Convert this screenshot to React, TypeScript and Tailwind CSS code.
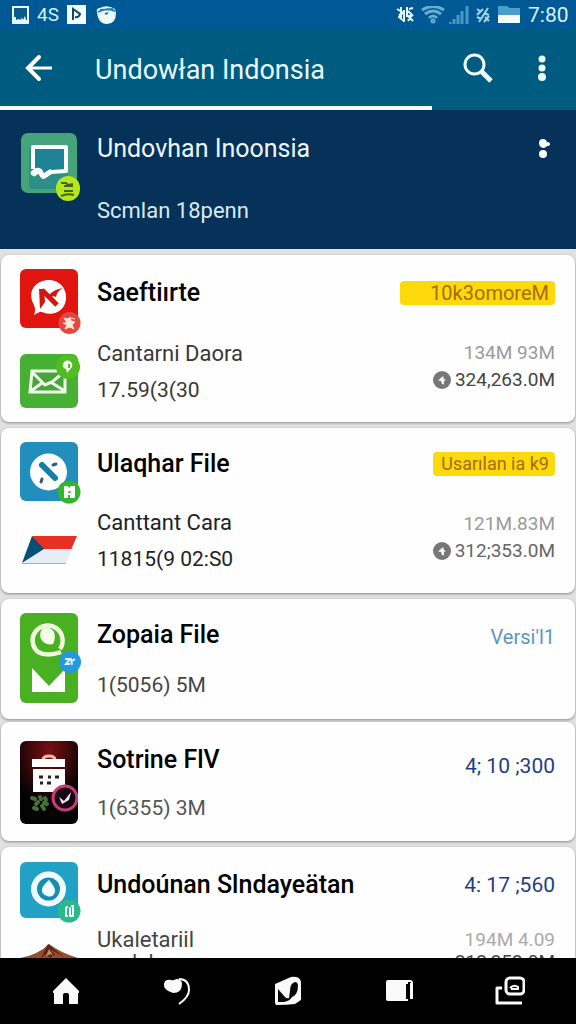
import React from "react";

interface FileCardProps {
  icons: React.ReactNode;
  title: string;
  name?: string;
  meta: string;
  right: React.ReactNode;
  className?: string;
  linesClass?: string;
}

function FileCard({ icons, title, name, meta, right, className = "", linesClass = "" }: FileCardProps) {
  return (
    <article
      className={`mx-px flex shrink-0 items-start rounded-lg bg-[#fefefe] pl-[19px] pr-5 shadow-[0_1px_3px_rgba(0,0,0,0.4)] ${className}`}
    >
      <div className="w-[77px] shrink-0">{icons}</div>
      <div className="min-w-0 flex-1 whitespace-nowrap">
        <h2 className="text-[25px] leading-8 font-medium text-black">{title}</h2>
        <div className={linesClass}>
          {name && <p className="text-[22px] leading-[inherit]">{name}</p>}
          <p className="text-[21px] leading-[inherit]">{meta}</p>
        </div>
      </div>
      <div className="flex shrink-0 flex-col items-end whitespace-nowrap">
        {right}
      </div>
    </article>
  );
}

function Tag({ children, className = "" }: { children: string; className?: string }) {
  return (
    <div className="flex h-8 items-center">
      <span
        className={`h-6 rounded-sm bg-[#fbd90b] pr-[6px] text-right leading-6 text-[#a66c08] ${className}`}
      >
        {children}
      </span>
    </div>
  );
}

function Sizes({ top, bottom, bottomClass }: { top: string; bottom: string; bottomClass: string }) {
  return (
    <div className="mt-[30px] text-right text-[19px] leading-[27px]">
      <p className="text-[#9a9a9a]">{top}</p>
      <p className={`flex items-center justify-end gap-1 ${bottomClass}`}>
        <svg viewBox="0 0 18 18" className="h-[18px] w-[18px]">
          <circle cx="9" cy="9" r="9" fill="#777" />
          <path d="M5 9.500 10 5l1 3 2 1-2 1v3.500l-2-.5-1-3z" fill="#f4f4f4" />
        </svg>
        {bottom}
      </p>
    </div>
  );
}

/* Icons */
const ChatIcon = () => (
  <svg viewBox="0 0 60 70" className="h-[70px] w-[60px]">
    <rect width="56" height="60" rx="7" fill="#45a47b" />
    <path d="M8 17 12 12h35v44H12q-4 0-4-5z" fill="#2c9088" />
    <path d="M12 36V14h33v24l-15 1-8 5-4-6-6 4" fill="#1d8296" stroke="#fff" strokeWidth="4" strokeLinejoin="round" />
    <path d="M12 40q4-4 7-2 2 5 4 5l6-4" fill="none" stroke="#fff" strokeWidth="5" strokeLinecap="round" />
    <rect x="35" y="43" width="24" height="25" rx="12" fill="#b5e71c" />
    <path d="M40 50h5l2 2 5-1M43 53h9M43 58h9M40 63q6-3 13-1" stroke="#40651a" strokeWidth="2" fill="none" />
  </svg>
);

const RedIcon = () => (
  <svg viewBox="0 0 61 66" className="h-[66px] w-[61px]">
    <rect width="58" height="59" rx="6" fill="#e01510" />
    <path d="M14 46q2-5 0-10C6 21 17 11 29 11c11 0 18 9 17 19-1 12-13 18-24 13-3-1-5 2-8 3z" fill="#fff" />
    <path d="m22 21 15 15" stroke="#d51512" strokeWidth="5" />
    <path d="M19 20h5l1 13-5 7z" fill="#d51512" />
    <path d="M28 27q6-7 15-8-6 3-7 9-3-2-7 1z" fill="#d51512" />
    <circle cx="49.500" cy="54" r="11" fill="#e54740" />
    <path d="m44 49 4 1 2-2 1 4 4 1-3 3 2 4-4-2-5 2 2-4-4-2h4zM51 49l4 1" fill="#ffe5db" stroke="#ffe5db" />
  </svg>
);

const MailIcon = () => (
  <svg viewBox="0 0 61 54" className="h-[54px] w-[61px]">
    <rect width="58" height="54" rx="6" fill="#46b035" />
    <path d="M12 17h33v21H10z" fill="#46a53c" stroke="#eefce8" strokeWidth="3" />
    <path d="m12 18 13 13 7-3 12-10M11 37l11-8m10 0 13 8" fill="none" stroke="#eefce8" strokeWidth="3" />
    <circle cx="48" cy="13" r="12" fill="#52bd20" />
    <path d="M43 10q2-5 7-3 3 2 2 6l-5 6-1-4q-4-1-3-5" fill="#f6ffee" />
    <path d="M49 10v4" stroke="#52bd20" strokeWidth="2" />
  </svg>
);

const BlueIcon = () => (
  <svg viewBox="0 0 61 62" className="h-[62px] w-[61px]">
    <rect width="58" height="59" rx="6" fill="#218ebb" />
    <circle cx="28.500" cy="30" r="18.500" fill="#fff" />
    <path d="m22 23 13 13" stroke="#137fa7" strokeWidth="6" strokeLinecap="round" />
    <path d="m33 23 3-1m-14 15-1 3" stroke="#315e7c" strokeWidth="3" strokeLinecap="round" />
    <circle cx="49" cy="50" r="11.500" fill="#34b52f" />
    <path d="M44 44h4l1 2 2-2h4v12h-5v-3h-2v3h-4z" fill="#fff" />
    <path d="M48 50h3" stroke="#34b52f" strokeWidth="1.500" />
  </svg>
);

const FlagIcon = () => (
  <svg viewBox="0 0 58 30" className="h-[30px] w-[58px]">
    <path d="M12 1h45l-6 14H23z" fill="#e63122" />
    <path d="M23 14h29l-6 14H2z" fill="#e6eef5" />
    <path d="M12 1 24 14 2 28z" fill="#095076" />
    <path d="M2 28.500h44" stroke="#8db8d0" />
  </svg>
);

const GreenIcon = () => (
  <svg viewBox="0 0 61 90" className="h-[90px] w-[61px]">
    <rect width="58" height="90" rx="6" fill="#49b021" />
    <path d="M18 39A15 15 0 1 1 40 36M18 39q9 5 23 0" fill="none" stroke="#effbdc" strokeWidth="4.500" />
    <path d="M22 16q7-4 12 3 2 6-1 12-8 2-12-5-2-5 1-10" fill="#f3fde8" />
    <path d="m12 55 17 18 16-17v23H12z" fill="#fff" />
    <circle cx="50" cy="49" r="11" fill="#2797df" />
    <path d="M45 46h5l-4 5h4m1-5 1 6m0-4 3-2" fill="none" stroke="#dff3ff" strokeWidth="2" />
  </svg>
);

const BlackIcon = () => (
  <svg viewBox="0 0 58 83" className="h-[83px] w-[58px]">
    <defs>
      <radialGradient id="redGlow" cx="50%" cy="12%" r="65%">
        <stop offset="0" stopColor="#781013" />
        <stop offset="0.600" stopColor="#35070a" />
        <stop offset="1" stopColor="#030303" />
      </radialGradient>
    </defs>
    <rect width="58" height="83" rx="6" fill="url(#redGlow)" />
    <path d="M23 19q0-4 6-4t6 4" fill="none" stroke="#eeb9a2" strokeWidth="3" />
    <path d="M12 18h33v8H12zM13 28h32v23H13z" fill="#fff" />
    <path d="M19 36h4m5 0h3m4 0h4M20 42h3m4 0h4" stroke="#222" strokeWidth="3" />
    <path d="m12 57 3 1m5-2 1 2m4-1 1 2m-10 4 2-2m6 1 3 1m-13 4 3 1m5-3 2 3" stroke="#47713a" strokeWidth="4" strokeLinecap="round" />
    <circle cx="45" cy="57" r="12" fill="#1a0512" stroke="#c83b7c" strokeWidth="3" />
    <path d="m39 56 5 4 7-9-2 8-7 4z" fill="#f3e4f2" />
  </svg>
);

const DropIcon = () => (
  <svg viewBox="0 0 61 62" className="h-[62px] w-[61px]">
    <rect width="58" height="56" rx="6" fill="#21a2c4" />
    <circle cx="28.500" cy="27" r="14.500" fill="#168eaf" stroke="#f0ffff" strokeWidth="6" />
    <path d="M29 18q7 8 6 12-2 6-8 4-6-2-5-7 1-4 7-9" fill="#effeff" />
    <circle cx="49" cy="49" r="11.500" fill="#2cb88d" />
    <path d="M46 45h2m-2 0v9h2M51 44h2v10h-3v-9" fill="none" stroke="#eafff6" strokeWidth="2" />
  </svg>
);

const MountainIcon = () => (
  <svg viewBox="0 0 58 40" className="h-10 w-[58px]">
    <path d="M0 14q18-3 29-14 12 9 29 14v26H0z" fill="#9b4c2a" />
    <path d="m28 0-7 14 5-4 4 4 5-3-5-6 14 8z" fill="#54281b" />
    <path d="m29 5-3 7 5-2 3 3z" fill="#d28a68" />
  </svg>
);

function StatusBar() {
  return (
    <div className="flex h-[29px] shrink-0 items-center bg-[#005994] pl-3 pr-2 text-[19px] leading-6 text-[#d7f3ff]">
      <svg viewBox="0 0 17 18" className="h-[18px] w-[17px]">
        <path d="M1 1h15v16H1z" fill="#0b5c8b" stroke="#e9fbff" strokeWidth="2" />
        <path d="M2 11h2v3l3-1 1 1 2-2 1 2 2-4 1 4h2v3H2z" fill="#e9fbff" />
      </svg>
      <span className="ml-2 w-[30px]">4S</span>
      <svg viewBox="0 0 19 19" className="h-[19px] w-[19px]">
        <path d="M0 0h19v19H0z" fill="#f3fdff" />
        <path d="M6 15V4l7 5q-1 4-5 3" fill="none" stroke="#17445e" strokeWidth="2" />
      </svg>
      <svg viewBox="0 0 21 20" className="ml-[10px] h-5 w-[21px]">
        <path d="M1 7q-1-4 3-4 7-4 15 1l1 4q0 11-9 11Q2 19 1 7" fill="#edfbff" />
        <path d="M2 7q9-5 17-1M4 5l13-1M9 9l3-1" fill="none" stroke="#2680a8" strokeWidth="2" />
      </svg>
      <div className="ml-auto flex items-center">
        <svg viewBox="0 0 18 18" className="h-[18px] w-[18px]" fill="none" stroke="#e5f7ff" strokeWidth="2">
          <path d="m1 3 5 3-3 5 5 4M5 1v12m3-9v12M3 9l4-2m4-6v9h5m-3-7 4-1m-5 3 5 5m-5 0 5 5m-1-7-4 7" />
        </svg>
        <svg viewBox="0 0 24 18" className="ml-[7px] h-[18px] w-6" fill="none" stroke="#67aed2" strokeWidth="3">
          <path d="M1 4q11-7 22 0M4 8q8-6 16 0M8 12q4-4 8 0" />
          <circle cx="12" cy="15" r="1" />
        </svg>
        <svg viewBox="0 0 20 18" className="ml-1 h-[18px] w-5" stroke="#4a97c5" strokeWidth="3">
          <path d="M1 18v-2m4 2v-5m4 5V9m4 9V5m5 13V0" />
        </svg>
        <svg viewBox="0 0 14 16" className="ml-[7px] h-4 w-[14px]" fill="none" stroke="#a5d6ec" strokeWidth="2">
          <path d="m1 2 4 3m2-3-6 6m11-7L3 15m-2-5 4 2m3-6 5 2m-4 2 4 4m0-5-5 6" />
        </svg>
        <svg viewBox="0 0 22 18" className="ml-2 h-[18px] w-[22px]">
          <path d="M0 0h9l3 2h10v8H0z" fill="#4b9dca" />
          <path d="M0 9h22v8H0z" fill="#f3fcff" />
        </svg>
        <span className="ml-2 w-10 text-[21px]">7:80</span>
      </div>
    </div>
  );
}

function BottomNav() {
  const button = "flex w-[111px] items-center justify-center";
  return (
    <nav className="flex h-[66px] shrink-0 justify-around bg-black px-[10px]">
      <button aria-label="Home" className={button}>
        <svg viewBox="0 0 28 28" className="h-7 w-7">
          <path d="M14 1 27 14v2h-1v11h-9v-9q0-2-2-2h-2q-2 0-2 2v9H2V16H1v-2z" fill="#fafafa" />
        </svg>
      </button>
      <button aria-label="Back" className={button}>
        <svg viewBox="0 0 28 30" className="h-[30px] w-7">
          <path d="M10 17Q0 14 1 8q1-5 7-4 3 1 5-1 6 0 6 5 0 9-9 9" fill="#fafafa" />
          <path d="M16 3q10 0 10 11 0 7-10 14" fill="none" stroke="#fafafa" strokeWidth="2" />
        </svg>
      </button>
      <button aria-label="Apps" className={button}>
        <svg viewBox="0 0 28 30" className="h-[30px] w-7">
          <path d="M1 8 17 1q9-1 10 5v18l-6 4q-8 1-19 1-1-1-1-3z" fill="#fafafa" />
          <path d="M4 13v13h6q6-1 8-5 6-2 6-12-1-5-5-2-3 2-3 8l-1 7q-2 1-4-1z" fill="#080808" />
        </svg>
      </button>
      <button aria-label="Overview" className={button}>
        <svg viewBox="0 0 28 24" className="h-6 w-7">
          <path d="M3 1h20v21H3q-2 0-2-2V3q0-2 2-2" fill="#fafafa" />
          <path d="M22 2h3q2 0 2 2v15h-1V4" fill="none" stroke="#fafafa" strokeWidth="2" />
          <path d="M22 5v15" stroke="#050505" strokeWidth="2" />
        </svg>
      </button>
      <button aria-label="Windows" className={button}>
        <svg viewBox="0 0 30 30" className="h-[30px] w-[30px]" fill="none" stroke="#fafafa">
          <rect x="11" y="2" width="18" height="16" rx="4" strokeWidth="3" />
          <path d="M7 12H2v15h25" strokeWidth="3" strokeLinejoin="round" />
          <path d="M15 12q4-4 8-1v2h-7" strokeWidth="2" />
        </svg>
      </button>
    </nav>
  );
}

export default function App() {
  return (
    <div className="flex h-screen flex-col overflow-hidden bg-[#e2e2e3] font-[Roboto,'Liberation_Sans',sans-serif]">
      <StatusBar />
      {/* App bar */}
      <header className="shrink-0 bg-[#005b80] text-white">
        <div className="flex h-[77px] items-center pl-6 pr-5">
          <button aria-label="Back" className="w-[71px]">
            <svg viewBox="0 0 30 28" className="h-7 w-[30px]" fill="none" stroke="#fff" strokeWidth="4">
              <path d="M15 3 4 14l11 11" strokeLinecap="round" />
              <path d="M4 14h24" strokeWidth="3" />
            </svg>
          </button>
          <h1 className="flex-1 whitespace-nowrap pt-1 text-[27px] leading-9 text-[#e9faff]">
            Undowłan Indonsia
          </h1>
          <button aria-label="Search">
            <svg viewBox="0 0 30 30" className="h-[30px] w-[30px]" fill="none" stroke="#f1fdff">
              <circle cx="11.500" cy="11.500" r="9.500" strokeWidth="3" />
              <path d="m18 18 10 10" strokeWidth="5" />
            </svg>
          </button>
          <button aria-label="More options" className="ml-[35px] flex w-7 justify-center">
            <svg viewBox="0 0 8 28" className="h-7 w-2" fill="#f1fdff">
              <circle cx="4" cy="5" r="3.500" />
              <circle cx="4" cy="14" r="3.500" />
              <circle cx="4" cy="23" r="4" />
            </svg>
          </button>
        </div>
        <div className="h-1 w-3/4 bg-[#f1fbff]"></div>
      </header>
      {/* Current download */}
      <section className="flex h-[139px] shrink-0 items-start bg-[#063159] pl-[21px] pr-5 pt-[23px] text-[#eef8ff]">
        <div className="w-[76px] shrink-0">
          <ChatIcon />
        </div>
        <div className="flex-1 whitespace-nowrap">
          <h2 className="text-[25px] leading-8">Undovhan Inoonsia</h2>
          <p className="mt-[30px] text-[22px] leading-8 text-[#d9eaf5]">Scmlan 18penn</p>
        </div>
        <button aria-label="More" className="flex h-8 w-6 items-center justify-center">
          <svg viewBox="0 0 12 20" className="h-5 w-3" fill="#fff">
            <path d="M5 0q3 0 4 3 3 0 3 2T9 7Q8 9 5 9 1 8 1 4t4-4" />
            <circle cx="5" cy="15" r="4" />
          </svg>
        </button>
      </section>
      {/* Files */}
      <main className="flex min-h-0 flex-1 flex-col gap-[6px] overflow-hidden pt-[6px]">
        <FileCard
          className="h-[167px] pt-[22px]"
          title="Saeftiırte"
          name="Cantarni Daora"
          meta="17.59(3(30"
          linesClass="mt-[26px] leading-[37px] text-[#383838]"
          icons={
            <div className="-mt-2 flex flex-col gap-[19px]">
              <RedIcon />
              <MailIcon />
            </div>
          }
          right={
            <>
              <Tag className="w-[155px] text-[20px]">10k3omoreM</Tag>
              <Sizes top="134M 93M" bottom="324,263.0M" bottomClass="text-[#444]" />
            </>
          }
        />
        <FileCard
          className="h-[165px] pt-5"
          title="Ulaqhar File"
          name="Canttant Cara"
          meta="11815(9 02:S0"
          linesClass="mt-6 leading-[37px] text-[#222]"
          icons={
            <div className="-mt-[6px] flex flex-col gap-[31px]">
              <BlueIcon />
              <FlagIcon />
            </div>
          }
          right={
            <>
              <Tag className="w-[122px] text-[18px]">Usarılan ia k9</Tag>
              <Sizes top="121M.83M" bottom="312;353.0M" bottomClass="text-[#666]" />
            </>
          }
        />
        <FileCard
          className="h-[120px] pt-5"
          title="Zopaia File"
          meta="1(5056) 5M"
          linesClass="mt-4 leading-[37px] text-[#444]"
          icons={
            <div className="-mt-[6px]">
              <GreenIcon />
            </div>
          }
          right={<p className="pt-[2px] text-[20px] leading-8 text-[#5b96c1]">Versi'l1</p>}
        />
        <FileCard
          className="-mt-[3px] h-[119px] pt-[22px]"
          title="Sotrine FlV"
          meta="1(6355) 3M"
          linesClass="mt-[14px] leading-[37px] text-[#555]"
          icons={
            <div className="-mt-[3px]">
              <BlackIcon />
            </div>
          }
          right={<p className="pt-[6px] text-[21px] leading-8 text-[#1e3f82]">4; 10 ;300</p>}
        />
        <FileCard
          className="h-[167px] pt-[22px]"
          title="Undoúnan Slndayeätan"
          name="Ukaletariil"
          meta="ıandal"
          linesClass="mt-7 leading-[22px] text-[#444]"
          icons={
            <div className="-mt-[7px] flex flex-col gap-5">
              <DropIcon />
              <MountainIcon />
            </div>
          }
          right={
            <>
              <p className="text-[21px] leading-8 text-[#1e3f82]">4: 17 ;560</p>
              <div className="mt-7 text-right text-[19px] leading-[22px]">
                <p className="text-[#aaa]">194M 4.09</p>
                <p className="text-[#444]">312,353.0M</p>
              </div>
            </>
          }
        />
      </main>
      <BottomNav />
    </div>
  );
}
